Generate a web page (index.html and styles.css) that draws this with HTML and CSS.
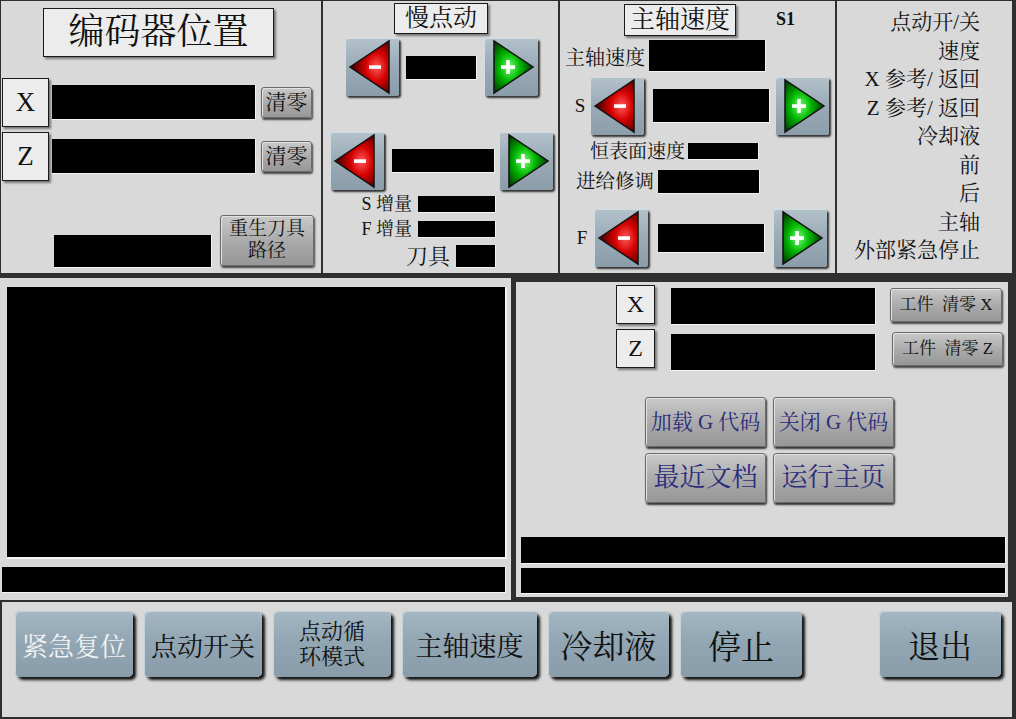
FILE: index.html
```html
<!DOCTYPE html>
<html lang="zh-CN">
<head>
<meta charset="utf-8">
<title>编码器位置</title>
<link rel="stylesheet" href="styles.css">
</head>
<body>
<svg class="defs" width="0" height="0" aria-hidden="true">
  <defs>
    <radialGradient id="gRed" cx="0.68" cy="0.5" r="0.62">
      <stop offset="0" stop-color="#ff5a5a"/>
      <stop offset="0.45" stop-color="#d40000"/>
      <stop offset="1" stop-color="#4a0000"/>
    </radialGradient>
    <radialGradient id="gGreen" cx="0.4" cy="0.5" r="0.62">
      <stop offset="0" stop-color="#6cff6c"/>
      <stop offset="0.45" stop-color="#00b400"/>
      <stop offset="1" stop-color="#003300"/>
    </radialGradient>
    <symbol id="aLeft" viewBox="0 0 54 58">
      <polygon points="5,29 44,3 44,55" fill="url(#gRed)" stroke="#111" stroke-width="1.5" stroke-linejoin="miter"/>
      <rect x="24" y="27.3" width="12" height="3.6" fill="#fff"/>
    </symbol>
    <symbol id="aRight" viewBox="0 0 54 58">
      <polygon points="10,3 10,55 49,29" fill="url(#gGreen)" stroke="#111" stroke-width="1.5"/>
      <rect x="17" y="27.3" width="14" height="3.6" fill="#fff"/>
      <rect x="22.2" y="22" width="3.6" height="14" fill="#fff"/>
    </symbol>
  </defs>
</svg>

<div class="screen">
  <div class="top">
    <!-- Panel 1: encoder position -->
    <section class="panel p1">
      <div class="enc-title">编码器位置</div>
      <div class="axis-row first">
        <div class="axis-label">X</div>
        <div class="field f-axis"></div>
        <div class="btn-gray clr">清零</div>
      </div>
      <div class="axis-row second">
        <div class="axis-label">Z</div>
        <div class="field f-axis"></div>
        <div class="btn-gray clr">清零</div>
      </div>
      <div class="regen-row">
        <div class="field f-regen"></div>
        <div class="btn-gray regen">重生刀具<br>路径</div>
      </div>
    </section>

    <!-- Panel 2: slow jog -->
    <section class="panel p2">
      <div class="box-title t-jog">慢点动</div>
      <div class="jog-row r1">
        <div class="arrow"><svg><use href="#aLeft"/></svg></div>
        <div class="field f-j1"></div>
        <div class="arrow"><svg><use href="#aRight"/></svg></div>
      </div>
      <div class="jog-row r2">
        <div class="arrow"><svg><use href="#aLeft"/></svg></div>
        <div class="field f-j2"></div>
        <div class="arrow"><svg><use href="#aRight"/></svg></div>
      </div>
      <div class="inc-row s-inc"><span class="lbl-sm">S 增量</span><div class="field f-inc"></div></div>
      <div class="inc-row f-incr"><span class="lbl-sm">F 增量</span><div class="field f-inc"></div></div>
      <div class="inc-row tool"><span class="lbl-md">刀具</span><div class="field f-tool"></div></div>
    </section>

    <!-- Panel 3: spindle speed -->
    <section class="panel p3">
      <div class="sp-head">
        <div class="box-title t-sp">主轴速度</div>
        <span class="s1">S1</span>
      </div>
      <div class="sp-row r-speed">
        <span class="lbl-20">主轴速度</span>
        <div class="field f-speed"></div>
      </div>
      <div class="sp-row r-s">
        <span class="axis-letter">S</span>
        <div class="arrow"><svg><use href="#aLeft"/></svg></div>
        <div class="field f-s"></div>
        <div class="arrow"><svg><use href="#aRight"/></svg></div>
      </div>
      <div class="sp-row r-css">
        <span class="lbl-19">恒表面速度</span>
        <div class="field f-css"></div>
      </div>
      <div class="sp-row r-feed">
        <span class="lbl-19b">进给修调</span>
        <div class="field f-feed"></div>
      </div>
      <div class="sp-row r-f">
        <span class="axis-letter f">F</span>
        <div class="arrow"><svg><use href="#aLeft"/></svg></div>
        <div class="field f-f"></div>
        <div class="arrow"><svg><use href="#aRight"/></svg></div>
      </div>
    </section>

    <!-- Panel 4: status list -->
    <section class="panel p4">
      <ul class="status">
        <li>点动开/关</li>
        <li>速度</li>
        <li>X 参考/ 返回</li>
        <li>Z 参考/ 返回</li>
        <li>冷却液</li>
        <li>前</li>
        <li>后</li>
        <li>主轴</li>
        <li>外部紧急停止</li>
      </ul>
    </section>
  </div>

  <div class="middle">
    <section class="panel mleft">
      <div class="canvas"></div>
      <div class="field bar-left"></div>
    </section>
    <section class="panel mright">
      <div class="work-row wx">
        <div class="axis-label sm">X</div>
        <div class="field f-work"></div>
        <div class="btn-gray wbtn">工件&nbsp; 清零 X</div>
      </div>
      <div class="work-row wz">
        <div class="axis-label sm">Z</div>
        <div class="field f-work"></div>
        <div class="btn-gray wbtn">工件&nbsp; 清零 Z</div>
      </div>
      <div class="gcode-grid">
        <div class="btn-gray gbtn small">加载 G 代码</div>
        <div class="btn-gray gbtn small">关闭 G 代码</div>
        <div class="btn-gray gbtn big">最近文档</div>
        <div class="btn-gray gbtn big">运行主页</div>
      </div>
      <div class="field bar-r1"></div>
      <div class="field bar-r2"></div>
    </section>
  </div>

  <div class="panel bottom">
    <div class="bbtn w118 white fs26">紧急复位</div>
    <div class="bbtn w118 fs26">点动开关</div>
    <div class="bbtn w118 fs22">点动循<br>环模式</div>
    <div class="bbtn w135 fs27">主轴速度</div>
    <div class="bbtn w121 fs32">冷却液</div>
    <div class="bbtn w122 fs33">停止</div>
    <div class="bbtn w122 fs32 exit">退出</div>
  </div>
</div>
</body>
</html>
```

FILE: styles.css
```css
* { box-sizing: border-box; }

html, body {
  margin: 0;
  padding: 0;
}

body {
  width: 1016px;
  height: 719px;
  background: #2f2f2f;
  overflow: hidden;
  font-family: "Liberation Serif", "Noto Serif CJK SC", "Noto Sans CJK SC", serif;
  color: #111;
}

.defs { position: absolute; width: 0; height: 0; }

.screen {
  width: 1016px;
  height: 719px;
}

.panel {
  background: #d9d9d9;
}

.field {
  background: #000;
  border-right: 1px solid #f4f4f4;
  border-bottom: 1px solid #f4f4f4;
}

/* ---------- top row ---------- */
.top {
  display: flex;
  gap: 2px;
  padding: 1px 0 0 1px;
  height: 274px;
}

.p1 { width: 320px; height: 272px; }
.p2 { width: 235px; height: 272px; }
.p3 { width: 275px; height: 272px; }
.p4 { width: 175px; height: 272px; }

/* panel 1 */
.enc-title {
  margin: 7px 0 0 42px;
  width: 231px;
  height: 49px;
  background: #ececec;
  border: 1px solid #1a1a1a;
  box-shadow: 2px 2px 2px #777;
  font-size: 36px;
  line-height: 46px;
  text-align: center;
}

.axis-row {
  display: flex;
  align-items: center;
  margin-left: 1px;
}
.axis-row.first { margin-top: 21px; }
.axis-row.second { margin-top: 5px; }

.axis-label {
  width: 47px;
  height: 49px;
  background: #ececec;
  border: 1px solid #1a1a1a;
  box-shadow: 2px 2px 2px #777;
  font-size: 27px;
  line-height: 47px;
  text-align: center;
}

.f-axis {
  margin-left: 3px;
  width: 204px;
  height: 35px;
}

.btn-gray {
  background: linear-gradient(#c9c9c9, #a9a9a9 55%, #979797);
  border: 1px solid #6a6a6a;
  border-radius: 3px;
  box-shadow: 1px 2px 2px #444, inset 1px 1px 0 #e2e2e2;
  color: #111;
  text-align: center;
}

.clr {
  margin-left: 5px;
  width: 51px;
  height: 31px;
  font-size: 21px;
  line-height: 29px;
}

.regen-row {
  display: flex;
  align-items: flex-end;
  margin-top: 34px;
}
.f-regen {
  margin-left: 53px;
  margin-bottom: -2px;
  width: 158px;
  height: 33px;
}
.regen {
  margin-left: 8px;
  width: 94px;
  height: 51px;
  font-size: 19px;
  line-height: 22px;
  padding-top: 2px;
}

/* panel 2 */
.box-title {
  background: #ececec;
  border: 1px solid #1a1a1a;
  box-shadow: 2px 2px 2px #777;
  text-align: center;
}
.t-jog {
  margin: 2px 0 0 71px;
  width: 94px;
  height: 31px;
  font-size: 24px;
  line-height: 29px;
}

.arrow {
  width: 54px;
  height: 58px;
  flex: none;
  background: linear-gradient(#b3c1ca, #9aabb6 50%, #8c9daa);
  border-radius: 3px;
  box-shadow: 2px 2px 2px #333, inset 1px 1px 0 #d2dce2;
}
.arrow svg {
  display: block;
  width: 54px;
  height: 58px;
}

.jog-row {
  display: flex;
  align-items: center;
}
.jog-row.r1 { margin-top: 4px; padding-left: 22px; gap: 7px; }
.jog-row.r2 { margin-top: 36px; padding-left: 7px; }
.f-j1 { width: 71px; height: 24px; margin-top: 2px; }
.f-j2 { width: 103px; height: 24px; margin: 0 4px 0 8px; }

.inc-row {
  display: flex;
  justify-content: flex-end;
  align-items: center;
  gap: 6px;
  padding-right: 62px;
}
.inc-row.s-inc { margin-top: 6px; }
.inc-row.f-incr { margin-top: 8px; }
.inc-row.tool { margin-top: 7px; }

.lbl-sm { font-size: 18px; line-height: 17px; }
.lbl-md { font-size: 22px; line-height: 23px; }
.f-inc { width: 78px; height: 17px; }
.f-tool { width: 40px; height: 23px; }

/* panel 3 */
.sp-head {
  display: flex;
  align-items: center;
  margin-top: 3px;
  padding-left: 64px;
}
.t-sp {
  width: 112px;
  height: 32px;
  font-size: 25px;
  line-height: 30px;
}
.s1 {
  margin-left: 40px;
  font-weight: bold;
  font-size: 18px;
  margin-top: -2px;
}

.sp-row {
  display: flex;
  align-items: center;
}
.r-speed { margin-top: 4px; padding-left: 5px; gap: 4px; }
.lbl-20 { font-size: 20px; }
.f-speed { width: 117px; height: 32px; }

.r-s { margin-top: 5px; padding-left: 10px; }
.axis-letter {
  width: 20px;
  font-size: 19px;
  text-align: center;
}
.axis-letter.f { width: 24px; }
.f-s { width: 117px; height: 34px; margin: 0 5px 0 9px; }

.r-css { margin-top: 8px; padding-left: 30px; gap: 3px; }
.lbl-19 { font-size: 19px; line-height: 17px; }
.f-css { width: 71px; height: 17px; }

.r-feed { margin-top: 10px; padding-left: 16px; gap: 4px; }
.lbl-19b { font-size: 19.5px; line-height: 24px; }
.f-feed { width: 102px; height: 24px; }

.r-f { margin-top: 15px; padding-left: 10px; }
.f-f { width: 107px; height: 29px; margin: 0 8px 0 10px; }

/* panel 4 */
.status {
  list-style: none;
  margin: 0;
  padding: 7px 32px 0 0;
  text-align: right;
  font-size: 21px;
  line-height: 28.5px;
}

/* ---------- middle row ---------- */
.middle {
  display: flex;
  align-items: flex-start;
  margin-top: 4px;
  height: 324px;
}

.mleft {
  width: 511px;
  height: 322px;
  padding-top: 9px;
}
.canvas {
  margin-left: 7px;
  width: 500px;
  height: 272px;
  background: #000;
  border-right: 2px solid #f4f4f4;
  border-bottom: 2px solid #f4f4f4;
}
.bar-left {
  margin: 8px 0 0 2px;
  width: 504px;
  height: 26px;
}

.mright {
  margin: 4px 0 0 5px;
  width: 492px;
  height: 315px;
  padding-top: 3px;
}

.work-row {
  display: flex;
  align-items: flex-start;
  padding-left: 100px;
}
.work-row.wz { margin-top: 4px; }
.axis-label.sm {
  width: 39px;
  height: 39px;
  font-size: 24px;
  line-height: 37px;
}
.f-work {
  margin: 3px 0 0 16px;
  width: 205px;
  height: 37px;
}
.wbtn {
  margin: 3px 0 0 14px;
  width: 112px;
  height: 34px;
  font-size: 17px;
  line-height: 32px;
  white-space: nowrap;
}
.wz .wbtn { margin-left: 16px; width: 111px; }
.wz .f-work { margin-top: 5px; }

.gcode-grid {
  display: grid;
  grid-template-columns: 121px 121px;
  grid-template-rows: 50px 50px;
  column-gap: 7px;
  row-gap: 6px;
  margin-top: 26px;
  padding-left: 129px;
}
.gbtn {
  color: #2a2c7c;
  box-shadow: 1px 2px 2px #333, inset 1px 1px 0 #e2e2e2;
}
.gbtn.small { font-size: 21px; line-height: 48px; }
.gbtn.big { font-size: 26px; line-height: 48px; }

.bar-r1 {
  margin: 34px 0 0 5px;
  width: 485px;
  height: 27px;
}
.bar-r2 {
  margin: 4px 0 0 5px;
  width: 485px;
  height: 26px;
}

/* ---------- bottom row ---------- */
.bottom {
  margin: 0 0 0 2px;
  width: 1010px;
  height: 115px;
  display: flex;
  align-items: flex-start;
  gap: 11px;
  padding: 9px 11px 0 13px;
}

.bbtn {
  height: 66px;
  background: linear-gradient(#a5b8c4, #92a6b3 45%, #889ca9);
  border-radius: 5px;
  box-shadow: 3px 3px 3px #111, inset 1px 1px 0 #c4d2da;
  display: flex;
  align-items: center;
  justify-content: center;
  text-align: center;
  color: #111;
  flex: none;
}
.bbtn.white { color: #f2f2f2; }
.bbtn.exit { margin-left: auto; }
.w118 { width: 118px; }
.w121 { width: 121px; }
.w122 { width: 122px; }
.w135 { width: 135px; }
.fs22 { font-size: 22px; line-height: 25px; }
.fs26 { font-size: 26px; }
.fs27 { font-size: 27px; }
.fs32 { font-size: 32px; }
.fs33 { font-size: 33px; }
```
